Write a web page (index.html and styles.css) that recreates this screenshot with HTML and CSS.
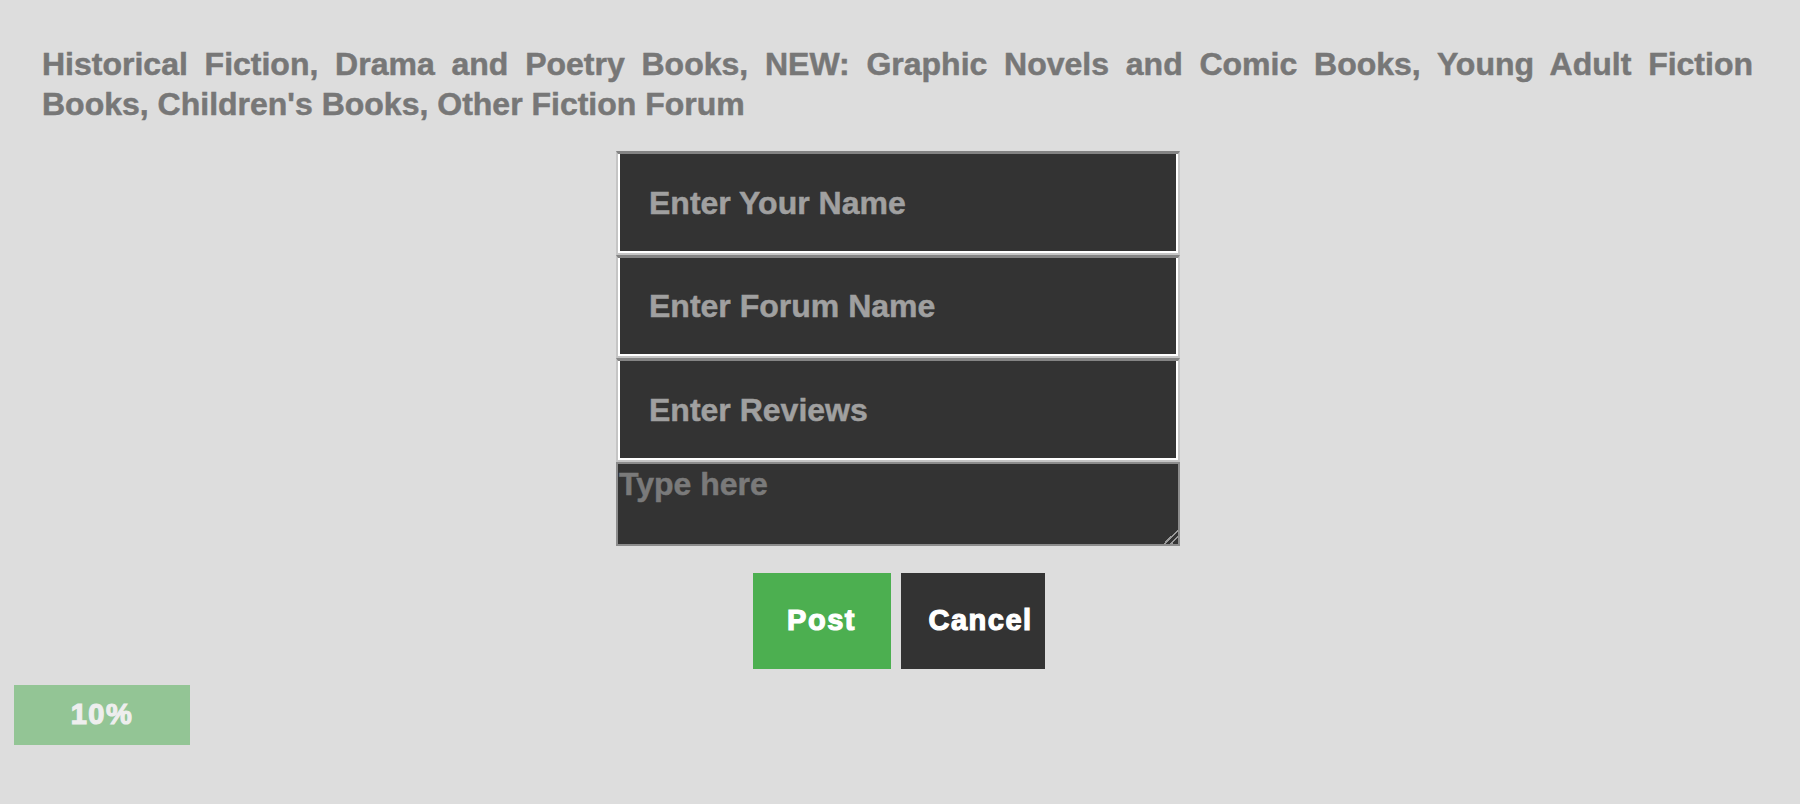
FILE: index.html
```html
<!DOCTYPE html>
<html lang="en">
<head>
<meta charset="utf-8">
<title>Forum</title>
<link rel="stylesheet" href="styles.css">
</head>
<body>
<h2 class="title">Historical Fiction, Drama and Poetry Books, NEW: Graphic Novels and Comic Books, Young Adult Fiction Books, Children's Books, Other Fiction Forum</h2>
<form class="post-form">
  <input class="field" type="text" placeholder="Enter Your Name">
  <input class="field" type="text" placeholder="Enter Forum Name">
  <input class="field" type="text" placeholder="Enter Reviews">
  <textarea class="review" placeholder="Type here"></textarea>
  <div class="actions">
    <button type="button" class="btn btn-post">Post</button>
    <button type="button" class="btn btn-cancel">Cancel</button>
  </div>
</form>
<div class="progress-wrap">
  <div class="progress">10%</div>
</div>
</body>
</html>
```

FILE: styles.css
```css
html, body {
  margin: 0;
  padding: 0;
  background: #dddddd;
  font-family: "Liberation Sans", Arial, sans-serif;
}

.title {
  margin: 0;
  padding: 44px 47px 0 42px;
  font-size: 32px;
  line-height: 40px;
  font-weight: bold;
  color: #777777;
  -webkit-text-stroke: 0.5px #777777;
  text-align: justify;
}

.post-form {
  width: 564px;
  margin: 27px 0 0 calc(50% - 284px);
  display: flex;
  flex-direction: column;
}

.field {
  box-sizing: border-box;
  width: 564px;
  height: 103.5px;
  margin: 0;
  padding: 0 20px 0 31px;
  background: #333333;
  border: 2px solid #c5c5c5;
  border-top: 3px solid #848484;
  box-shadow: inset 2px 0 0 #ffffff, inset -2px 0 0 #ffffff, inset 0 -2px 0 #ffffff;
  font-family: "Liberation Sans", Arial, sans-serif;
  font-size: 32px;
  font-weight: bold;
  color: #a0a0a0;
  -webkit-text-stroke: 0.5px #a0a0a0;
  outline: none;
}

.field::placeholder {
  color: #a0a0a0;
  opacity: 1;
}

.review {
  box-sizing: border-box;
  width: 564px;
  height: 84px;
  margin: 0;
  padding: 2px 1px;
  background: #333333;
  border: 2px solid #8c8c8c;
  font-family: "Liberation Sans", Arial, sans-serif;
  font-size: 32px;
  font-weight: bold;
  color: #7a7a7a;
  -webkit-text-stroke: 0.5px #7a7a7a;
  resize: both;
  outline: none;
}

.review::placeholder {
  color: #7a7a7a;
  opacity: 1;
}

.review::-webkit-resizer {
  background: linear-gradient(135deg,
    transparent 0, transparent 50%,
    #9a9a9a 50%, #9a9a9a 58%,
    transparent 58%, transparent 72%,
    #9a9a9a 72%, #9a9a9a 80%,
    transparent 80%);
}

.actions {
  display: flex;
  justify-content: center;
  gap: 10px;
  margin-top: 27px;
  padding-left: 1px;
}

.btn {
  box-sizing: border-box;
  height: 96px;
  border: none;
  margin: 0;
  color: #ffffff;
  font-family: "Liberation Sans", Arial, sans-serif;
  font-size: 29px;
  font-weight: bold;
  letter-spacing: 1.5px;
  -webkit-text-stroke: 1.2px #ffffff;
  white-space: nowrap;
  cursor: pointer;
}

.btn-post {
  width: 138px;
  padding: 0;
  background: #4caf50;
  text-align: center;
}

.btn-cancel {
  width: 144px;
  padding: 0 0 0 28px;
  background: #333333;
  text-align: left;
}

.progress-wrap {
  padding: 16px 0 0 14px;
}

.progress {
  width: 176px;
  height: 60px;
  display: flex;
  align-items: center;
  justify-content: center;
  background: #4caf50;
  opacity: 0.5;
  color: #ffffff;
  font-size: 29px;
  font-weight: bold;
  letter-spacing: 1.5px;
  -webkit-text-stroke: 1.2px #ffffff;
}
```
